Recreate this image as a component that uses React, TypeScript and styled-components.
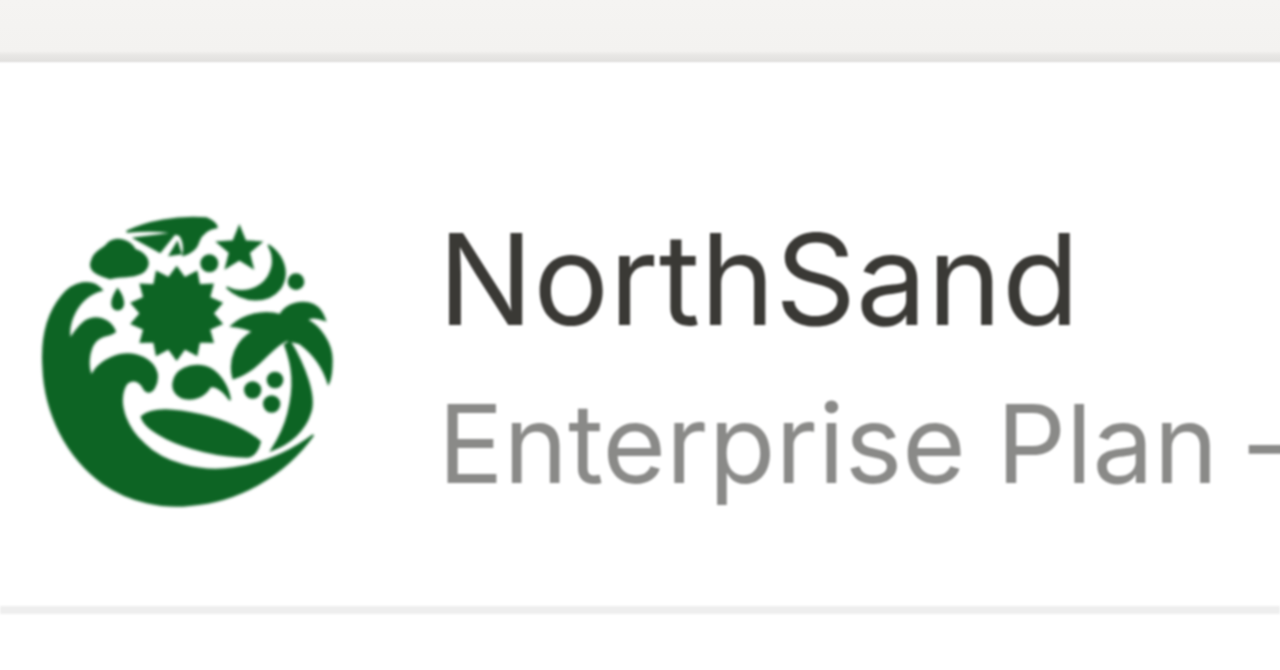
import React from "react";
import styled, { createGlobalStyle } from "styled-components";

const Global = createGlobalStyle`
  html, body { margin: 0; padding: 0; background: #fff; height: 100%; overflow: hidden; }
  #root { height: 100%; }
`;

const Page = styled.div`
  width: 1280px;
  height: 670px;
  overflow: hidden;
  background: #fff;
  display: flex;
  flex-direction: column;
  font-family: Inter, "Liberation Sans", sans-serif;
`;

const TopBar = styled.div`
  height: 64px;
  flex: none;
  background: linear-gradient(
    to bottom,
    #f5f4f2 0,
    #f3f2f0 51px,
    #e8e7e5 55px,
    #e2e1df 61px,
    #fafafa 63px,
    #fff 64px
  );
`;

const Row = styled.div`
  height: 542px;
  flex: none;
  box-sizing: border-box;
  display: flex;
  align-items: flex-start;
  padding: 136px 0 0 20px;
  gap: 88px;
  background: #fff;
`;

const BottomRule = styled.div`
  height: 8px;
  flex: none;
  background: #eeeeee;
  filter: blur(0.8px);
`;

const LogoMark = styled.svg`
  width: 330px;
  height: 320px;
  flex: none;
  filter: blur(1.5px);
`;

const Info = styled.div`
  display: flex;
  flex-direction: column;
  white-space: nowrap;
  padding-top: 4px;
  gap: 25px;
  filter: blur(0.8px);
`;

const Name = styled.div`
  font-size: 126.5px;
  font-weight: 400;
  line-height: 150px;
  color: #3a3935;
`;

const Plan = styled.div`
  font-size: 109px;
  font-weight: 400;
  line-height: 128px;
  color: #8a8a88;
`;

const starPoints = (cx: number, cy: number, outer: number, inner: number, n: number, rot = -Math.PI / 2) =>
  Array.from({ length: n * 2 }, (_, i) => {
    const r = i % 2 === 0 ? outer : inner;
    const a = rot + (i * Math.PI) / n;
    return `${(cx + r * Math.cos(a)).toFixed(1)},${(cy + r * Math.sin(a)).toFixed(1)}`;
  }).join(" ");

const Logo = () => (
  <LogoMark viewBox="0 0 990 960" fill="#0d6424" stroke="#0d6424" strokeWidth="6" aria-label="NorthSand logo">
    <path d="M245 270C215 235 160 245 125 290C80 345 65 420 70 500C75 640 140 770 250 850C330 905 430 925 510 915C650 905 790 830 880 705C820 750 740 790 640 805C540 820 430 790 370 730C320 685 295 620 310 570C320 535 355 530 375 570C395 590 415 550 410 520C400 480 350 455 300 465C260 475 225 500 215 530C200 500 205 450 225 425C245 400 270 410 285 395C270 355 225 345 195 365C175 380 155 410 150 420C140 370 170 290 245 270Z" />
    <path d="M215 185C220 155 250 150 265 130C290 110 330 120 345 150C375 160 395 185 375 210C350 235 300 225 270 235C240 225 205 215 215 185Z" />
    <path d="M293 268C305 285 312 305 308 318C302 332 284 332 278 318C274 305 282 285 293 268Z" />
    <polygon points={starPoints(470, 340, 138, 108, 14)} />
    <path d="M320 95C380 65 470 48 560 55C575 60 590 75 590 82C565 85 545 100 535 125C530 145 510 160 490 165C495 140 490 120 480 105C440 88 380 90 320 95Z" />
    <path d="M345 115L465 100L420 156Z" />
    <path d="M450 165L472 128L482 160Z" />
    <polygon points={starPoints(658, 148, 68, 30, 5)} />
    <circle cx="568" cy="190" r="24" />
    <path d="M745 135C790 165 810 220 780 265C745 310 670 310 620 262C665 285 720 270 745 230C765 195 760 160 745 135Z" />
    <circle cx="828" cy="245" r="22" />
    <path d="M635 378C670 345 730 330 780 345C800 310 850 300 880 315C900 325 910 345 915 360C890 350 870 350 860 360C900 380 935 430 935 480C935 510 930 540 925 550C910 500 880 460 840 430L800 420C750 440 720 510 640 535C625 480 650 420 700 395C680 385 655 380 635 378Z" />
    <path d="M810 425C850 490 890 590 870 640C855 690 810 730 755 750C775 720 795 680 805 640C825 560 820 500 795 435Z" />
    <circle cx="698" cy="570" r="23" />
    <circle cx="765" cy="540" r="22" />
    <circle cx="755" cy="612" r="23" />
    <path d="M460 550C465 510 510 490 555 500C595 510 625 560 630 600C610 570 585 555 570 560C555 590 520 600 495 595C470 590 458 570 460 550Z" />
    <path d="M365 650C400 620 470 630 540 645C610 660 680 690 720 725C715 750 700 770 680 770C600 770 500 745 440 715C400 695 370 675 365 650Z" />
  </LogoMark>
);

export default function App() {
  return (
    <Page>
      <Global />
      <TopBar />
      <Row>
        <Logo />
        <Info>
          <Name>NorthSand</Name>
          <Plan>Enterprise Plan –</Plan>
        </Info>
      </Row>
      <BottomRule />
    </Page>
  );
}
